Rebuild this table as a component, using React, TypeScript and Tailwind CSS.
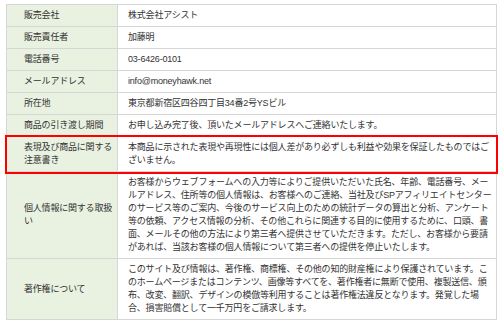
const rows: { label: string[]; value: string[]; alert?: boolean }[] = [
  { label: ["販売会社"], value: ["株式会社アシスト"] },
  { label: ["販売責任者"], value: ["加藤明"] },
  { label: ["電話番号"], value: ["03-6426-0101"] },
  { label: ["メールアドレス"], value: ["info@moneyhawk.net"] },
  { label: ["所在地"], value: ["東京都新宿区四谷四丁目34番2号YSビル"] },
  {
    label: ["商品の引き渡し期間"],
    value: ["お申し込み完了後、頂いたメールアドレスへご連絡いたします。"],
  },
  {
    label: ["表現及び商品に関する", "注意書き"],
    value: [
      "本商品に示された表現や再現性には個人差があり必ずしも利益や効果を保証したものではご",
      "ざいません。",
    ],
    alert: true,
  },
  {
    label: ["個人情報に関する取扱", "い"],
    value: [
      "お客様からウェブフォームへの入力等によりご提供いただいた氏名、年齢、電話番号、メー",
      "ルアドレス、住所等の個人情報は、お客様へのご連絡、当社及びSPアフィリエイトセンター",
      "のサービス等のご案内、今後のサービス向上のための統計データの算出と分析、アンケート",
      "等の依頼、アクセス情報の分析、その他これらに関連する目的に使用するために、口頭、書",
      "面、メールその他の方法により第三者へ提供させていただきます。ただし、お客様から要請",
      "があれば、当該お客様の個人情報について第三者への提供を停止いたします。",
    ],
  },
  {
    label: ["著作権について"],
    value: [
      "このサイト及び情報は、著作権、商標権、その他の知的財産権により保護されています。こ",
      "のホームページまたはコンテンツ、画像等すべてを、著作権者に無断で使用、複製送信、頒",
      "布、改変、翻訳、デザインの模倣等利用することは著作権法違反となります。発覚した場",
      "合、損害賠償として一千万円をご請求します。",
    ],
  },
];

export default function App() {
  return (
    <div
      className="min-h-screen bg-white pt-[4px] px-[6px] text-[9px] leading-[13px] tracking-[-0.2px] text-[#333]"
      style={{ fontFamily: '"Liberation Sans", "Noto Sans CJK JP", sans-serif' }}
    >
      <div className="w-[491px] border border-[#d6d6d6]">
        {rows.map((row, i) => (
          <div
            key={i}
            className={
              "grid grid-cols-[111px_1fr] " +
              (i < rows.length - 1 ? "border-b border-[#d6d6d6] " : "") +
              (row.alert ? "outline-2 outline-[#f00] relative z-10" : "")
            }
          >
            <div className="flex flex-col justify-center bg-[#e9f1e1] border-r border-[#d6d6d6] pl-[17px] py-[4px]">
              {row.label.map((l, j) => (
                <span key={j} className="whitespace-nowrap">
                  {l}
                </span>
              ))}
            </div>
            <div className="flex flex-col justify-center pl-[10px] py-[4px]">
              {row.value.map((v, j) => (
                <span key={j} className="whitespace-nowrap">
                  {v}
                </span>
              ))}
            </div>
          </div>
        ))}
      </div>
    </div>
  );
}
